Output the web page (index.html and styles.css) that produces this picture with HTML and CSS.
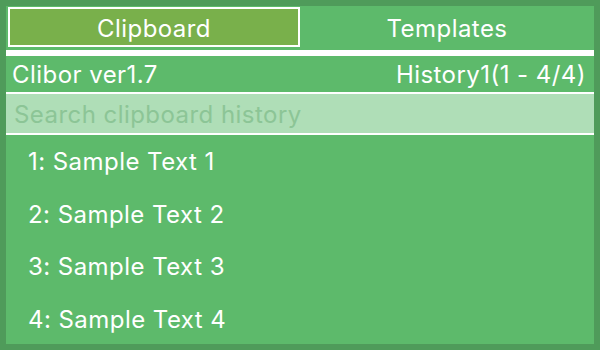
FILE: index.html
```html
<!DOCTYPE html>
<html lang="en">
<head>
  <meta charset="UTF-8">
  <title>Clibor</title>
  <link rel="stylesheet" href="styles.css">
</head>
<body>
  <div class="window">
    <!-- Tabs -->
    <div class="tabs">
      <div class="tab active">Clipboard</div>
      <div class="tab">Templates</div>
    </div>
    <div class="divider"></div>

    <!-- Header -->
    <div class="header">
      <span>Clibor ver1.7</span>
      <span>History1(1 - 4/4)</span>
    </div>
    <input class="search" type="text" placeholder="Search clipboard history">

    <!-- History list -->
    <ul class="list">
      <li>1: Sample Text 1</li>
      <li>2: Sample Text 2</li>
      <li>3: Sample Text 3</li>
      <li>4: Sample Text 4</li>
    </ul>
  </div>
</body>
</html>
```

FILE: styles.css
```css
body {
  margin: 0;
  padding: 0;
  font-family: Inter, "Liberation Sans", sans-serif;
  background: #4f9b5a;
}

.window {
  width: 600px;
  height: 350px;
  box-sizing: border-box;
  border: 6px solid #4f9b5a;
  background: #5dba6b;
  color: #fff;
  display: flex;
  flex-direction: column;
  overflow: hidden;
  font-size: 24px;
  letter-spacing: 0.45px;
}

.window > * {
  flex-shrink: 0;
}

/* Tabs across the top */
.tabs {
  display: grid;
  grid-template-columns: 292px 1fr;
  padding: 1px 0 0 2px;
}

.tab {
  height: 40px;
  box-sizing: border-box;
  display: flex;
  align-items: center;
  justify-content: center;
  padding-top: 2px;
  border: 2px solid transparent;
}

.tab.active {
  background: #79b04b;
  border-color: #fff;
}

.divider {
  height: 6px;
  margin-top: 3px;
  background: #fff;
}

.header {
  height: 38px;
  box-sizing: border-box;
  display: flex;
  align-items: center;
  justify-content: space-between;
  padding: 1px 8px 0 6px;
  border-bottom: 2px solid #fff;
}

.search {
  height: 41px;
  box-sizing: border-box;
  border: 0;
  border-bottom: 2px solid #fff;
  margin: 0;
  padding: 2px 8px 0;
  background: #afdeb7;
  font-family: inherit;
  font-size: 24px;
  letter-spacing: 0.45px;
  color: #fff;
  outline: none;
}

.search::placeholder {
  color: #8cc596;
}

.list {
  list-style: none;
  margin: 0;
  padding: 0;
}

.list li {
  height: 52.5px;
  box-sizing: border-box;
  display: flex;
  align-items: center;
  padding: 1px 0 0 22px;
}
```
